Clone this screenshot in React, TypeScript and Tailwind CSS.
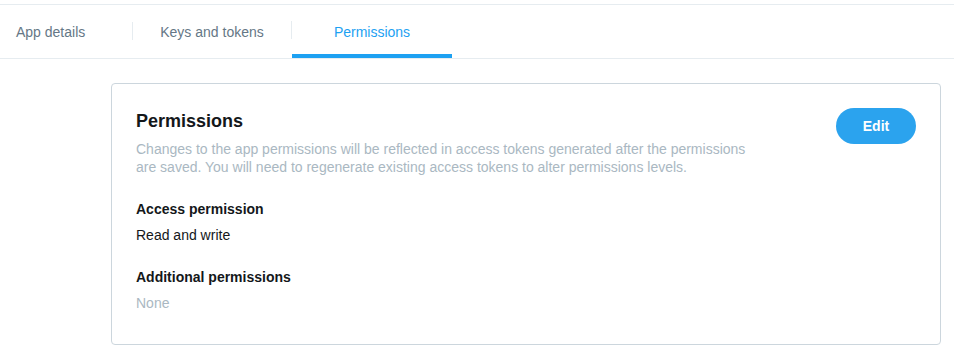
import React from "react";

export default function App() {
  const font = { fontFamily: '"Liberation Sans", Arial, Helvetica, sans-serif' };
  return (
    <div className="w-[954px] h-[354px] bg-white overflow-hidden" style={font}>
      <div className="h-[4px]" />
      <div className="border-t border-b border-[#e6ecf0] h-[55px] flex items-stretch">
        <div className="w-[132px] flex items-center pl-4 pt-[2px] text-[14px] text-[#657786]">
          App details
        </div>
        <div className="w-px bg-[#e6ecf0] h-[18px] self-center mb-[2px]" />
        <div className="w-[158px] flex items-center justify-center pt-[2px] text-[14px] text-[#657786]">
          Keys and tokens
        </div>
        <div className="w-px bg-[#e6ecf0] h-[18px] self-center mb-[4px]" />
        <div className="w-[160px] relative flex items-center justify-center pt-[2px] text-[14px] text-[#1da1f2]">
          Permissions
          <div className="absolute left-0 right-0 bottom-0 h-[4px] bg-[#1da1f2]" />
        </div>
      </div>
      <div className="ml-[111px] mt-[24px] w-[830px] h-[262px] border border-[#ccd6dd] rounded-[4px] pl-[24px] pr-[24px] pt-[24px]">
        <div className="flex justify-between items-start">
          <div>
            <div className="text-[18px] font-bold text-[#14171a] leading-[24px] mt-[1px]">Permissions</div>
            <div className="text-[14px] text-[#aab8c2] leading-[18px] w-[620px] mt-[7px]">
              Changes to the app permissions will be reflected in access tokens generated after the permissions are saved. You will need to regenerate existing access tokens to alter permissions levels.
            </div>
          </div>
          <button className="w-[80px] h-[36px] rounded-full bg-[#2ba3ee] text-white text-[14px] font-bold">
            Edit
          </button>
        </div>
        <div className="mt-[24px] text-[14px] font-bold text-[#14171a] leading-[18px]">Access permission</div>
        <div className="mt-[8px] text-[14px] text-[#14171a] leading-[18px]">Read and write</div>
        <div className="mt-[24px] text-[14px] font-bold text-[#14171a] leading-[18px]">Additional permissions</div>
        <div className="mt-[8px] text-[14px] text-[#aab8c2] leading-[18px]">None</div>
      </div>
    </div>
  );
}
